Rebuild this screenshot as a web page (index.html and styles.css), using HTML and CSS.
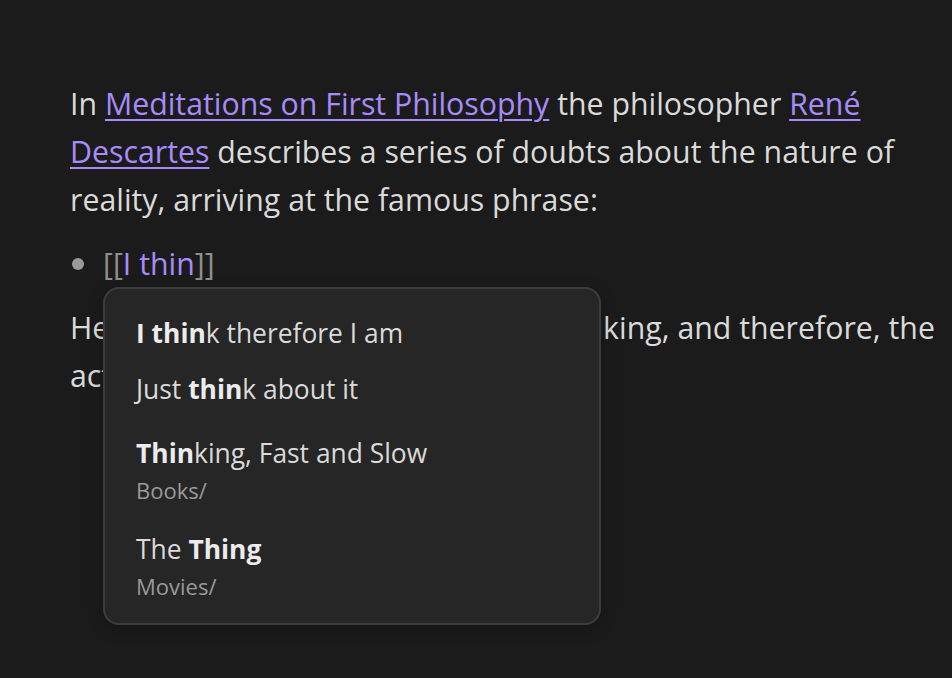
FILE: index.html
```html
<!DOCTYPE html>
<html lang="en">
<head>
<meta charset="utf-8">
<title>Note</title>
<link rel="stylesheet" href="styles.css">
</head>
<body>
<main class="note">
  <p class="para">In <a class="link" href="#">Meditations on First Philosophy</a> the philosopher <a class="link" href="#">René Descartes</a> describes a series of doubts about the nature of reality, arriving at the famous phrase:</p>
  <ul class="list">
    <li class="list-item">
      <span class="bracket">[[</span><span class="typed">I thin</span><span class="bracket">]]</span>
      <div class="suggest">
        <div class="suggest-item"><b>I thin</b>k therefore I am</div>
        <div class="suggest-item">Just <b>thin</b>k about it</div>
        <div class="suggest-item has-path">
          <div class="suggest-title"><b>Thin</b>king, Fast and Slow</div>
          <div class="suggest-path">Books/</div>
        </div>
        <div class="suggest-item has-path">
          <div class="suggest-title">The <b>Thing</b></div>
          <div class="suggest-path">Movies/</div>
        </div>
      </div>
    </li>
  </ul>
  <p class="para">Here Descartes realises that he is thinking, and therefore, the act of thinking proves that he exists.</p>
</main>
</body>
</html>
```
FILE: styles.css
```css
* { box-sizing: border-box; }

html, body {
  margin: 0;
  padding: 0;
  background: #1b1b1b;
}

body {
  width: 952px;
  height: 678px;
  overflow: hidden;
  font-family: "Open Sans", "Noto Sans", sans-serif;
  color: #dadada;
}

.note {
  padding: 80px 12px 0 70px;
  font-size: 30.3px;
  line-height: 48px;
}

.para {
  margin: 0 0 16px 0;
}

.link {
  color: #a78bfa;
  text-decoration: underline;
  text-decoration-thickness: 2px;
  text-underline-offset: 4px;
}

.list {
  margin: 0 0 16px 0;
  padding: 0 0 0 33px;
  list-style: none;
}

.list-item {
  position: relative;
}

.list-item::before {
  content: "";
  position: absolute;
  left: -31px;
  top: 18px;
  width: 12px;
  height: 12px;
  border-radius: 50%;
  background: #9a9a9a;
}

.bracket { color: #8f8f8f; }
.typed { color: #a78bfa; }

.suggest {
  position: absolute;
  left: 0;
  top: 47px;
  width: 498px;
  height: 338px;
  padding: 16px 0 14px 0;
  background: #262626;
  border: 2px solid #3c3c3c;
  border-radius: 16px;
  box-shadow: 0 4px 16px rgba(0, 0, 0, 0.25);
  font-size: 26.4px;
  color: #dadada;
}

.suggest b {
  font-weight: 700;
  color: #ececec;
}

.suggest-item {
  padding: 8px 31px;
  line-height: 40px;
}

.suggest-item.has-path {
  padding: 16px 31px 6px 31px;
}

.suggest-path {
  font-size: 22px;
  line-height: 34px;
  color: #999999;
}
```
